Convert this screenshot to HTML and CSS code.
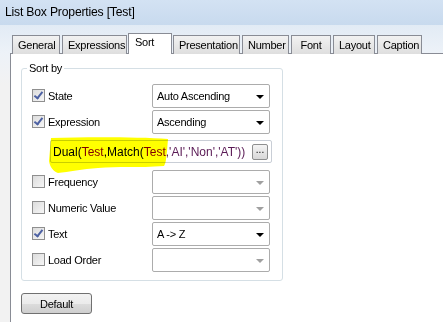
FILE: index.html
```html
<!DOCTYPE html>
<html>
	<head>
		<title>List Box Properties [Test]</title>
		<link rel="stylesheet" href="styles.css">
	</head>
	<body>
		<div class="titlebar">List Box Properties [Test]</div>
		<div class="dialog">
			<div class="tabs">
				<span class="tab">General</span>
				<span class="tab">Expressions</span>
				<span class="tab active">Sort</span>
				<span class="tab">Presentation</span>
				<span class="tab">Number</span>
				<span class="tab">Font</span>
				<span class="tab">Layout</span>
				<span class="tab">Caption</span>
			</div>
			<div class="panel">
				<div class="group">
					<span class="legend">Sort by</span>
					<div class="row">
						<label class="check"><span class="box on"></span>State</label>
						<div class="select">Auto Ascending<i class="arrow"></i></div>
					</div>
					<div class="row">
						<label class="check"><span class="box on"></span>Expression</label>
						<div class="select">Ascending<i class="arrow"></i></div>
					</div>
					<div class="expr">
						<span class="code"><span class="fn">Dual(</span><span class="fld">Test</span>,<span class="fn">Match(</span><span class="fld">Test</span><span class="str">,'AI','Non','AT'))</span></span>
						<span class="dots">...</span>
					</div>
					<div class="row gap">
						<label class="check"><span class="box"></span>Frequency</label>
						<div class="select off"><i class="arrow"></i></div>
					</div>
					<div class="row">
						<label class="check"><span class="box"></span>Numeric Value</label>
						<div class="select off"><i class="arrow"></i></div>
					</div>
					<div class="row">
						<label class="check"><span class="box on"></span>Text</label>
						<div class="select">A -&gt; Z<i class="arrow"></i></div>
					</div>
					<div class="row">
						<label class="check"><span class="box"></span>Load Order</label>
						<div class="select off"><i class="arrow"></i></div>
					</div>
				</div>
				<button class="btn">Default</button>
			</div>
		</div>
		<svg class="marker" width="140" height="40" viewBox="0 0 140 40">
			<path d="M3 1 C40 0 90 0 120 2 L119 14 C118 22 118 26 116 29 C90 31 70 29 50 31 C35 32 20 35 10 36 C5 34 2 30 1 24 Z" fill="#ffff00"/>
		</svg>
	</body>
</html>
```

FILE: styles.css
```css
html, body {
	margin: 0;
	padding: 0;
	height: 100%;
	overflow: hidden;
	font-family: "Liberation Sans", Arial, sans-serif;
	font-size: 11px;
	letter-spacing: -0.25px;
	color: #000;
	background: #f0f0f0;
}
.titlebar {
	height: 25px;
	line-height: 24px;
	padding-left: 5px;
	font-size: 12.2px;
	letter-spacing: -0.2px;
	background: linear-gradient(#d3e2f3, #c8daee);
	box-sizing: border-box;
}
.dialog {
	height: calc(100% - 25px);
	padding-left: 10px;
	display: flex;
	flex-direction: column;
	background: linear-gradient(#e2ebf5 0, #edf2f8 28px, #f2f2f2 60px);
}
.tabs {
	display: flex;
	align-items: flex-end;
	gap: 2px;
	margin-top: 8px;
	padding-left: 2px;
	height: 20px;
	position: relative;
	z-index: 1;
}
.tab {
	height: 18px;
	line-height: 19px;
	padding: 0 5px;
	border: 1px solid #898c95;
	border-bottom: none;
	background: linear-gradient(#f2f2f2, #dedede);
	white-space: nowrap;
	text-align: center;
	margin-bottom: -1px;
	font-size: 11px;
}
.tab:nth-child(1) { width: 36px; }
.tab:nth-child(2) { width: 53px; }
.tab:nth-child(4) { width: 55px; }
.tab:nth-child(5) { width: 35px; }
.tab:nth-child(6) { width: 28px; }
.tab:nth-child(7) { width: 30px; }
.tab:nth-child(8) { width: 33px; }
.tab.active {
	height: 20px;
	line-height: 17px;
	width: 31px;
	text-align: left;
	background: #fff;
	margin: 0 -1px -1px -1px;
	padding: 0 5px 0 6px;
}
.panel {
	flex: 1;
	background: #fff;
	border-top: 1px solid #898c95;
	border-left: 1px solid #898c95;
	padding: 0 0 0 10px;
}
.group {
	position: relative;
	margin-top: 14px;
	width: 262px;
	border: 1px solid #d5dfe5;
	border-radius: 3px;
	padding: 15px 0 6px 10px;
	box-sizing: border-box;
}
.legend {
	position: absolute;
	top: -8px;
	left: 5px;
	padding: 0 2px;
	background: #fff;
	line-height: 14px;
}
.row {
	display: flex;
	align-items: center;
	height: 24px;
	margin-bottom: 2px;
}
.row.gap {
	margin-top: 7px;
}
.check {
	display: flex;
	align-items: center;
	gap: 3px;
	width: 120px;
	margin-top: -1px;
}
.box {
	width: 11px;
	height: 11px;
	border: 1px solid #8f8f8f;
	background: linear-gradient(135deg, #dcdcdc, #f6f6f6);
	position: relative;
}
.box.on::after {
	content: "";
	position: absolute;
	left: 3px;
	top: 0px;
	width: 3px;
	height: 7px;
	border: solid #4d61a3;
	border-width: 0 2px 2px 0;
	transform: rotate(38deg);
}
.select {
	position: relative;
	width: 118px;
	height: 24px;
	box-sizing: border-box;
	border: 1px solid #acacac;
	border-radius: 2px;
	background: #fff;
	line-height: 22px;
	padding-left: 4px;
}
.arrow {
	position: absolute;
	right: 5px;
	top: 10px;
	border-left: 4px solid transparent;
	border-right: 4px solid transparent;
	border-top: 4px solid #000;
}
.select.off .arrow {
	border-top-color: #a0a0a0;
}
.expr {
	display: flex;
	align-items: center;
	justify-content: space-between;
	margin: 6px 0 0 18px;
	width: 222px;
	height: 23px;
	box-sizing: border-box;
	border: 1px solid #c9ced6;
	border-radius: 2px;
	padding: 0 3px 0 2px;
	background: #fff;
	font-size: 12px;
	letter-spacing: 0;
}
.fn { color: #0000ff; }
.fld { color: #800000; }
.str { color: #5a1a55; }
.dots {
	width: 14px;
	height: 14px;
	line-height: 10px;
	text-align: center;
	border: 1px solid #8e8f8f;
	border-radius: 2px;
	background: linear-gradient(#f4f4f4, #d8d8d8);
	font-size: 10px;
}
.btn {
	margin-top: 12px;
	width: 71px;
	height: 21px;
	font: inherit;
	letter-spacing: inherit;
	border: 1px solid #707070;
	border-radius: 3px;
	background: linear-gradient(#f2f2f2 0, #ebebeb 50%, #dddddd 51%, #cfcfcf 100%);
	padding: 0;
}
.marker {
	position: absolute;
	left: 48px;
	top: 137px;
	mix-blend-mode: multiply;
}
```
